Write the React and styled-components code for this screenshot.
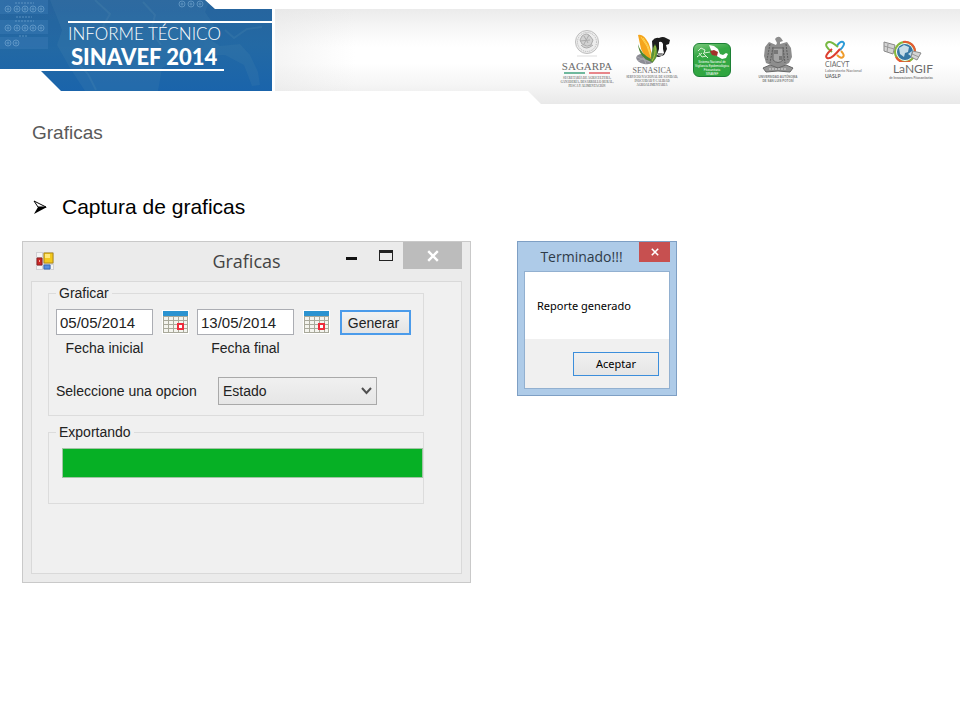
import React, { useState } from 'react';
import styled, { createGlobalStyle } from 'styled-components';


const GlobalStyle = createGlobalStyle`
    * {
        box-sizing: border-box;
    }
    body {
        margin: 0;
        background: #fff;
        font-family: "Liberation Sans", Arial, sans-serif;
    }
    h1, h2, p {
        margin: 0;
        font-weight: normal;
    }
    button, input, select {
        font-family: inherit;
        margin: 0;
    }
`;

/* ---------- header ---------- */

const Header = styled.header`
    display: flex;
    align-items: flex-start;
    gap: 3px;
`;

const Brand = styled.div`
    position: relative;
    flex: none;
    width: 272px;
    height: 91px;
    padding-top: 21px;
    background: linear-gradient(#27649d, #2369a4 50%, #1a64ab);
    clip-path: polygon(0 0, 205px 0, 215px 9px, 100% 9px, 100% 100%, 61px 100%, 41px 71px, 41px 70px, 0 70px);
    color: #fff;
`;

const BrandArt = styled.svg`
    position: absolute;
    inset: 0;
`;

const BrandTitle = styled.div`
    position: relative;
    height: 48px;
    margin-left: 68px;
    padding-top: 1px;
    border-top: 2px solid #fff;
    font-family: Lato, sans-serif;
`;

const BrandTop = styled.div`
    font-size: 17px;
    font-weight: 300;
    line-height: 20px;
    white-space: nowrap;
`;

const BrandName = styled.div`
    padding-left: 3px;
    font-size: 22px;
    font-weight: 900;
    line-height: 25px;
    white-space: nowrap;
`;

const BrandRule = styled.div`
    position: relative;
    width: 224px;
    height: 2px;
    background: #fff;
`;

const Strip = styled.div`
    flex: 1;
    min-width: 0;
    display: flex;
    justify-content: flex-end;
    align-items: flex-start;
    height: 95px;
    margin-top: 9px;
    padding: 19px 27px 0 0;
    background:
        linear-gradient(90deg, rgba(228, 228, 228, 0.4), rgba(255, 255, 255, 0) 80px),
        linear-gradient(#ebebeb, #f7f7f7 20px, #fff 38px, #fff 54px, #f5f5f5 76px, #e9e9e9);
    clip-path: polygon(0 0, 100% 0, 100% 100%, 266px 100%, 253px 82px, 0 82px);
`;

const Logo = styled.div`
    display: flex;
    flex-direction: column;
    align-items: ${(props) => props.$align || 'center'};
    width: ${(props) => props.$width}px;
    margin-right: ${(props) => props.$gap || 0}px;
    padding-top: ${(props) => props.$top || 0}px;
    color: #6b6b6b;
    white-space: nowrap;
`;

const LogoName = styled.div`
    font-family: ${(props) => (props.$serif ? '"Liberation Serif", serif' : 'Lato, sans-serif')};
    font-size: ${(props) => props.$size}px;
    font-weight: ${(props) => (props.$bold ? 700 : 400)};
    line-height: ${(props) => props.$line}px;
`;

const LogoNote = styled.div`
    color: #808080;
    font-family: ${(props) => (props.$serif ? '"Liberation Serif", serif' : '"Liberation Sans", sans-serif')};
    font-size: 3px;
    font-weight: bold;
    line-height: 4px;
    text-align: center;
`;

const FlagRule = styled.div`
    width: 46px;
    height: 2px;
    margin: 0 0 2px;
    background: linear-gradient(90deg, #6fb89d 45%, transparent 45%, transparent 54%, #e8868b 54%);
`;

const Badge = styled.div`
    display: flex;
    flex-direction: column;
    align-items: center;
    width: 38px;
    height: 34px;
    margin: 15px 26px 0 0;
    border: 1px solid #1c8035;
    border-radius: 6px;
    background: linear-gradient(165deg, #7cc97c, #36a845 30%, #2fa53f);
    color: #fff;
    font-size: 3px;
    line-height: 4px;
    white-space: nowrap;
`;

/* ---------- slide text ---------- */

const Main = styled.main`
    padding: 19px 22px;
`;

const SlideTitle = styled.h1`
    padding-left: 10px;
    color: #595959;
    font-size: 19px;
    line-height: 20px;
`;

const Topics = styled.ul`
    list-style: none;
    margin: 52px 0 22px;
    padding: 0 0 0 10px;
`;

const Topic = styled.li`
    display: flex;
    align-items: center;
    gap: 14px;
    color: #000;
    font-size: 21px;
    line-height: 24px;
`;

const Screens = styled.div`
    display: flex;
    align-items: flex-start;
    gap: 46px;
`;

/* ---------- main window ---------- */

const Window = styled.section`
    flex: 0 1 449px;
    padding: 0 8px 8px;
    border: 1px solid #c9c9c9;
    background: #ebebeb;
    color: #222;
`;

const TitleBar = styled.div`
    display: grid;
    grid-template-columns: 1fr auto 1fr;
    height: 39px;
`;

const AppIcon = styled.svg`
    margin: 10px 0 0 5px;
`;

const WindowTitle = styled.h2`
    padding-top: 6px;
    color: #444;
    font-family: "Open Sans", sans-serif;
    font-size: 18px;
    line-height: 26px;
`;

const WindowButtons = styled.div`
    display: flex;
    justify-content: flex-end;
    align-items: flex-start;
`;

const WindowButton = styled.button`
    display: flex;
    align-items: center;
    justify-content: center;
    width: ${(props) => props.$width}px;
    height: 27px;
    padding: 0;
    border: 0;
    background: ${(props) => (props.$close ? '#bcbcbc' : 'transparent')};
`;

const Client = styled.div`
    height: 293px;
    padding: 2px 37px 0 16px;
    border: 1px solid #d9d9d9;
    background: #f0f0f0;
`;

const Group = styled.fieldset`
    min-width: 0;
    height: ${(props) => props.$height}px;
    margin: 0 0 7px;
    padding: 0;
    border: 1px solid #dcdcdc;
`;

const GroupTitle = styled.legend`
    margin-left: 7px;
    padding: 0 3px;
    font-size: 14px;
    line-height: 18px;
`;

const DateRow = styled.div`
    display: flex;
    align-items: flex-start;
    padding: 7px 0 0 7px;
`;

const DateField = styled.div`
    display: flex;
    flex-direction: column;
    width: 97px;
`;

const DateInput = styled.input`
    order: -1;
    width: 100%;
    height: 26px;
    padding: 0 3px;
    border: 1px solid #abadb3;
    background: #fff;
    color: #222;
    font-size: 15px;
`;

const DateLabel = styled.label`
    padding: 4px 0 0;
    font-size: 14px;
    line-height: 18px;
    text-align: center;
`;

const CalendarButton = styled.button`
    width: 28px;
    height: 26px;
    margin: 0 8px;
    padding: 1px 0 0;
    border: 0;
    background: transparent;
`;

const Generate = styled.button`
    width: 71px;
    height: 25px;
    margin-top: 1px;
    margin-left: 2px;
    padding: 0 4px 0 0;
    border: 2px solid #4b9bea;
    background: linear-gradient(#f2f2f2, #e4e4e4);
    color: #222;
    font-size: 14px;
`;

const OptionRow = styled.div`
    display: flex;
    align-items: center;
    padding: 20px 0 0 7px;
    font-size: 14px;
`;

const SelectWrap = styled.div`
    position: relative;
    width: 159px;
    margin-left: auto;
    margin-right: 46px;
`;

const OptionSelect = styled.select`
    appearance: none;
    display: block;
    width: 100%;
    height: 28px;
    padding: 0 4px;
    border: 1px solid #a9a9a9;
    border-radius: 0;
    background: linear-gradient(#f0f0f0, #e6e6e6);
    color: #222;
    font-size: 14px;
`;

const Chevron = styled.svg`
    position: absolute;
    right: 5px;
    top: 10px;
    pointer-events: none;
`;

const Progress = styled.progress`
    appearance: none;
    display: block;
    width: calc(100% - 13px);
    height: 30px;
    margin: 7px 0 0 13px;
    border: 1px solid #a3c4a5;
    background: #e6e6e6;

    &::-webkit-progress-bar {
        background: #e6e6e6;
    }
    &::-webkit-progress-value {
        background: #06b025;
    }
`;

/* ---------- message box ---------- */

const Dialog = styled.section`
    flex: 0 1 160px;
    padding: 0 6px 6px;
    border: 1px solid #7e9fc4;
    background: #aecbe8;
    color: #000;
    font-family: "Noto Sans", sans-serif;
`;

const DialogBar = styled.div`
    display: flex;
    align-items: flex-start;
    height: 29px;
`;

const DialogTitle = styled.h2`
    flex: 1;
    padding-top: 5px;
    color: #2e3b48;
    font-family: "Open Sans", sans-serif;
    font-size: 14px;
    line-height: 20px;
    text-align: center;
`;

const DialogClose = styled.button`
    display: flex;
    align-items: center;
    justify-content: center;
    width: 31px;
    height: 20px;
    padding: 0;
    border: 0;
    background: #c75050;
`;

const DialogBody = styled.div`
    border: 1px solid #92b0d0;
    background: #fff;
`;

const Message = styled.p`
    padding: 25px 12px 24px;
    font-size: 11px;
    line-height: 18px;
    white-space: nowrap;
`;

const DialogActions = styled.div`
    display: flex;
    justify-content: flex-end;
    padding: 13px 10px 12px;
    background: #f0f0f0;
`;

const AcceptButton = styled.button`
    width: 86px;
    height: 24px;
    padding: 0 0 2px;
    border: 1px solid #3c8edb;
    background: linear-gradient(#f0f0f0, #e5e5e5);
    color: #000;
    font-size: 11px;
`;


function BrandPattern() {
    const dots = [
        [8, 9], [17, 9], [25, 9], [33, 9], [41, 9],
        [8, 28], [17, 28], [25, 28], [33, 28], [41, 28],
        [8, 43], [16, 43],
        [182, 4], [191, 4], [200, 4],
    ];

    return (
        <BrandArt width="272" height="91" viewBox="0 0 272 91" aria-hidden="true">
            <path d="M0 0H48V14H0zM0 20H48V34H0zM0 37H48V49H0z" fill="#3b7cb5" opacity="0.45" />
            <path
                d="M50 0L210 0L205 12L214 25L208 38L220 46L240 44L250 55L258 72L260 85L252 86L244 65L225 55L185 56L162 68L158 91H85L70 68L57 45L62 30z"
                fill="#4c86ad"
                opacity="0.2"
            />
            <path d="M95 0L110 14L103 26L120 33M143 2L155 15L151 31L161 45M75 60L88 74L96 90M225 30L234 38L247 29L262 27" fill="none" stroke="#7aa9ba" strokeWidth="2" opacity="0.12" />
            <g fill="none" stroke="#8bb9df" opacity="0.5">
                {dots.map(([x, y]) => (
                    <g key={`${x}-${y}`}>
                        <circle cx={x} cy={y} r="3" />
                        <circle cx={x} cy={y} r="1" />
                    </g>
                ))}
                <path d="M15 3H34M16 17H32M15 21H34M19 36H28" strokeDasharray="2 1" />
            </g>
        </BrandArt>
    );
}

function Logos() {
    return (
        <>
            <Logo $width={56} $gap={17}>
                <svg width="30" height="32" viewBox="0 0 30 32" aria-hidden="true">
                    <circle cx="15" cy="14" r="11.5" fill="#ededed" stroke="#bdbdbd" />
                    <circle cx="15" cy="14" r="9.5" fill="none" stroke="#b3b3b3" strokeDasharray="1 1" />
                    <path d="M10 8q5-4 8 0l3 4-2 5-4 1-5-2-2-4zM9 17q5 6 12 0M12 8l4 7M17 7l-5 9M8 13l10-1" fill="#d2d2d2" stroke="#ababab" />
                    <path d="M5 28H25" stroke="#ddd" />
                </svg>
                <LogoName $serif $size={11} $line={12}>SAGARPA</LogoName>
                <FlagRule />
                <LogoNote $serif>SECRETARÍA DE AGRICULTURA,</LogoNote>
                <LogoNote $serif>GANADERÍA, DESARROLLO RURAL,</LogoNote>
                <LogoNote $serif>PESCA Y ALIMENTACIÓN</LogoNote>
            </Logo>
            <Logo $width={40} $gap={21} $top={5}>
                <svg width="36" height="34" viewBox="0 0 36 34" aria-hidden="true">
                    <path d="M18 8q3-4 7-3 4-2 7 0l4 2-1 4-3 1 1 4-3 6-5 2-6-1z" fill="#1d1d1d" />
                    <path d="M25 9q3-1 4 2v5l1 4-3 3-4-1 2-6z" fill="#fff" />
                    <path d="M24 20l5 0-2 3-3-1z" fill="#8b8b8b" />
                    <ellipse cx="11" cy="26" rx="9" ry="5" fill="#8c8c95" transform="rotate(12 11 26)" />
                    <path d="M3 24l13 5M4 28l10-5M9 22l3 9" stroke="#a9a9b0" />
                    <path d="M4 2q4-1 8 4 5 6 6 20-8-2-11-10z" fill="#f5a51c" />
                    <path d="M7 4q7 8 10 20M9 5q6 7 8 18" fill="none" stroke="#ffd454" />
                    <path d="M4 11q2 9 14 16l0 2q-13-4-14-18z" fill="#4d8733" />
                    <path d="M18 30q-3-9 3-19 6 11-3 19z" fill="#5a9138" />
                    <path d="M21 13q1 9-3 15" fill="none" stroke="#b5cb3b" />
                </svg>
                <LogoName $serif $size={8} $line={8}>SENASICA</LogoName>
                <LogoNote $serif>SERVICIO NACIONAL DE SANIDAD,</LogoNote>
                <LogoNote $serif>INOCUIDAD Y CALIDAD</LogoNote>
                <LogoNote $serif>AGROALIMENTARIA</LogoNote>
            </Logo>
            <Badge>
                <svg width="34" height="16" viewBox="0 0 34 16" aria-hidden="true">
                    <path d="M14 1l5 1 4 3 2 5 3 1 3-2 2 1-2 4-4 1-7-4-4-5z" fill="#fff" />
                    <path d="M3 7l3-3 4 2-1 3 6-1M4 9l3 4 4-1M8 9l5 5M2 13l5-4" fill="none" stroke="#d7f1d3" />
                    <path d="M15 7l4-1 4 2-1 4-5-1z" fill="#a33229" />
                </svg>
                <div>Sistema Nacional de</div>
                <div>Vigilancia Epidemiológica</div>
                <div>Fitosanitaria</div>
                <div>SINAVEF</div>
            </Badge>
            <Logo $width={42} $gap={26} $top={8}>
                <svg width="32" height="39" viewBox="0 0 32 39" aria-hidden="true">
                    <path d="M13 3q3-4 6-1l2 3-3 1 0 2 7-2 4 6 1 9-3 6-4 2-1 3H10l-1-3-5-2-2-7 1-9 4-5 7 3 1-2z" fill="#8d8d8d" />
                    <path d="M8 8l-3 16M11 11L8 27M24 8l2 16M21 11l2 16" stroke="#5d5d5d" strokeDasharray="2 1" />
                    <path d="M11 12h10v12q-5 5-10 0z" fill="#a5a5a5" stroke="#666" />
                    <path d="M12 14h4v4h-4zM17 20h3v4h-3z" fill="#777" />
                    <path d="M1 32l7-3 8 3 8-3 7 3-3 4-12-1-12 1z" fill="#959595" stroke="#666" />
                    <path d="M7 33h18" stroke="#ddd" strokeDasharray="2 1" />
                </svg>
                <LogoNote>UNIVERSIDAD AUTÓNOMA</LogoNote>
                <LogoNote>DE SAN LUIS POTOSÍ</LogoNote>
            </Logo>
            <Logo $width={42} $gap={16} $top={12} $align="flex-start">
                <svg width="20" height="20" viewBox="0 0 20 20" fill="none" strokeWidth="2" aria-hidden="true">
                    <path d="M12 6q3-5 6-4 3 2-3 8" stroke="#2d9bd7" />
                    <path d="M13 7Q5 0 2 3q-3 3 5 9" stroke="#78b943" />
                    <path d="M7 9Q-1 16 2 18q4 2 13-9" stroke="#dd3f2f" />
                    <path d="M12 15q4 4 6 2 2-2-2-6" stroke="#ee9b2b" />
                </svg>
                <LogoName $size={7} $line={8}>CIACYT</LogoName>
                <LogoName $size={4} $line={5}>Laboratorio Nacional</LogoName>
                <LogoName $bold $size={5} $line={6}>UASLP</LogoName>
            </Logo>
            <Logo $width={50} $top={12} $align="flex-end">
                <svg width="50" height="22" viewBox="0 0 50 22" aria-hidden="true">
                    <circle cx="22" cy="12" r="10" fill="none" stroke="#86b73d" strokeWidth="2" />
                    <path d="M20 2a10 10 0 0 1 12 10M13 17a10 10 0 0 0 14 4" fill="none" stroke="#e65932" strokeWidth="2" />
                    <circle cx="22" cy="12" r="8" fill="#3678a4" />
                    <path d="M16 8l5-3 5 2-1 5-3 1-1 4-4-3zM25 14l4-3-1 5z" fill="#c7dde8" />
                    <path d="M1 2l11 3-2 9-9-3zM30 11l8 2-4 7-6-3z" fill="#d4d4d4" stroke="#8a8a8a" />
                    <path d="M1 6l10 3M5 4L4 12M29 14l7 3" stroke="#999" />
                </svg>
                <LogoName $size={12} $line={14}>LaNGIF</LogoName>
                <LogoNote>de Innovaciones Fitosanitarias</LogoNote>
            </Logo>
        </>
    );
}

function CalendarIcon() {
    return (
        <svg width="28" height="24" viewBox="0 0 28 24" aria-hidden="true">
            <path d="M1 0H28V24H1z" fill="#fff" />
            <path d="M2 6H27V23H2z" fill="#a9a99b" />
            <path d="M2 1H27V6H2z" fill="#2b93d0" />
            {[7, 11, 15, 19].map((y) => (
                <path key={y} d={`M3 ${y}h4v3h-4zM8 ${y}h4v3h-4zM13 ${y}h4v3h-4zM18 ${y}h4v3h-4zM23 ${y}h3v3h-3z`} fill="#f4f4ee" />
            ))}
            <path d="M17 14h5v5h-5z" fill="#fff" stroke="#ee2b3c" strokeWidth="2" />
        </svg>
    );
}

function CloseIcon({ size }) {
    return (
        <svg width={size} height={size} viewBox="0 0 10 10" aria-hidden="true">
            <path d="M1 1L9 9M9 1L1 9" stroke="#fff" strokeWidth="2" />
        </svg>
    );
}

function GraphWindow() {
    const [start, setStart] = useState('05/05/2014');
    const [end, setEnd] = useState('13/05/2014');
    const [option, setOption] = useState('Estado');

    return (
        <Window aria-labelledby="window-title">
            <TitleBar>
                <AppIcon width="18" height="18" viewBox="0 0 18 18" aria-hidden="true">
                    <path d="M0 0H18V18H0z" fill="#d0d0d4" />
                    <path d="M1 1H6V5H1zM1 14H6V17H1zM15 13H17V17H15z" fill="#f4f4f4" />
                    <path d="M8 1H17V11H8z" fill="#f2c81d" stroke="#b48b12" />
                    <path d="M9 2H14V6H9z" fill="#ffe779" />
                    <path d="M1 6H6V13H1z" fill="#cb2726" stroke="#8d2021" />
                    <path d="M3 8h1v2h-1z" fill="#f5aaa2" />
                    <path d="M8 13H14V17H8z" fill="#5790df" stroke="#3468b8" />
                </AppIcon>
                <WindowTitle id="window-title">Graficas</WindowTitle>
                <WindowButtons>
                    <WindowButton $width={36} aria-label="Minimizar">
                        <svg width="11" height="11" viewBox="0 0 11 11"><path d="M0 7H11V10H0z" fill="#111" /></svg>
                    </WindowButton>
                    <WindowButton $width={34} aria-label="Maximizar">
                        <svg width="14" height="12" viewBox="0 0 14 12"><path d="M0 0H14V11H0zM1 3V10H13V3z" fill="#222" fillRule="evenodd" /></svg>
                    </WindowButton>
                    <WindowButton $width={59} $close aria-label="Cerrar">
                        <CloseIcon size={12} />
                    </WindowButton>
                </WindowButtons>
            </TitleBar>
            <Client>
                <Group $height={132}>
                    <GroupTitle>Graficar</GroupTitle>
                    <DateRow>
                        <DateField>
                            <DateLabel htmlFor="start">Fecha inicial</DateLabel>
                            <DateInput id="start" type="text" value={start} onChange={(e) => setStart(e.target.value)} />
                        </DateField>
                        <CalendarButton aria-label="Elegir fecha inicial"><CalendarIcon /></CalendarButton>
                        <DateField>
                            <DateLabel htmlFor="end">Fecha final</DateLabel>
                            <DateInput id="end" type="text" value={end} onChange={(e) => setEnd(e.target.value)} />
                        </DateField>
                        <CalendarButton aria-label="Elegir fecha final"><CalendarIcon /></CalendarButton>
                        <Generate>Generar</Generate>
                    </DateRow>
                    <OptionRow>
                        <label htmlFor="option">Seleccione una opcion</label>
                        <SelectWrap>
                            <OptionSelect id="option" value={option} onChange={(e) => setOption(e.target.value)}>
                                <option value="Estado">Estado</option>
                            </OptionSelect>
                            <Chevron width="11" height="9" viewBox="0 0 11 9" aria-hidden="true">
                                <path d="M1 1L5.500 6L10 1" fill="none" stroke="#505050" strokeWidth="2" />
                            </Chevron>
                        </SelectWrap>
                    </OptionRow>
                </Group>
                <Group $height={81}>
                    <GroupTitle id="export">Exportando</GroupTitle>
                    <Progress aria-labelledby="export" value={100} max={100} />
                </Group>
            </Client>
        </Window>
    );
}

function App() {
    return (
        <>
            <GlobalStyle />
            <Header>
                <Brand>
                    <BrandPattern />
                    <BrandTitle>
                        <BrandTop>INFORME TÉCNICO</BrandTop>
                        <BrandName>SINAVEF 2014</BrandName>
                    </BrandTitle>
                    <BrandRule />
                </Brand>
                <Strip>
                    <Logos />
                </Strip>
            </Header>
            <Main>
                <SlideTitle>Graficas</SlideTitle>
                <Topics>
                    <Topic>
                        <svg width="16" height="16" viewBox="0 0 16 16" aria-hidden="true">
                            <path d="M2 2L14 8L6 8z" fill="#fff" stroke="#000" />
                            <path d="M6 8L15 8L2 15z" />
                        </svg>
                        Captura de graficas
                    </Topic>
                </Topics>
                <Screens>
                    <GraphWindow />
                    <Dialog role="dialog" aria-labelledby="dialog-title">
                        <DialogBar>
                            <DialogTitle id="dialog-title">Terminado!!!</DialogTitle>
                            <DialogClose aria-label="Cerrar"><CloseIcon size={8} /></DialogClose>
                        </DialogBar>
                        <DialogBody>
                            <Message>Reporte generado</Message>
                            <DialogActions>
                                <AcceptButton>Aceptar</AcceptButton>
                            </DialogActions>
                        </DialogBody>
                    </Dialog>
                </Screens>
            </Main>
        </>
    );
}

export default App;
